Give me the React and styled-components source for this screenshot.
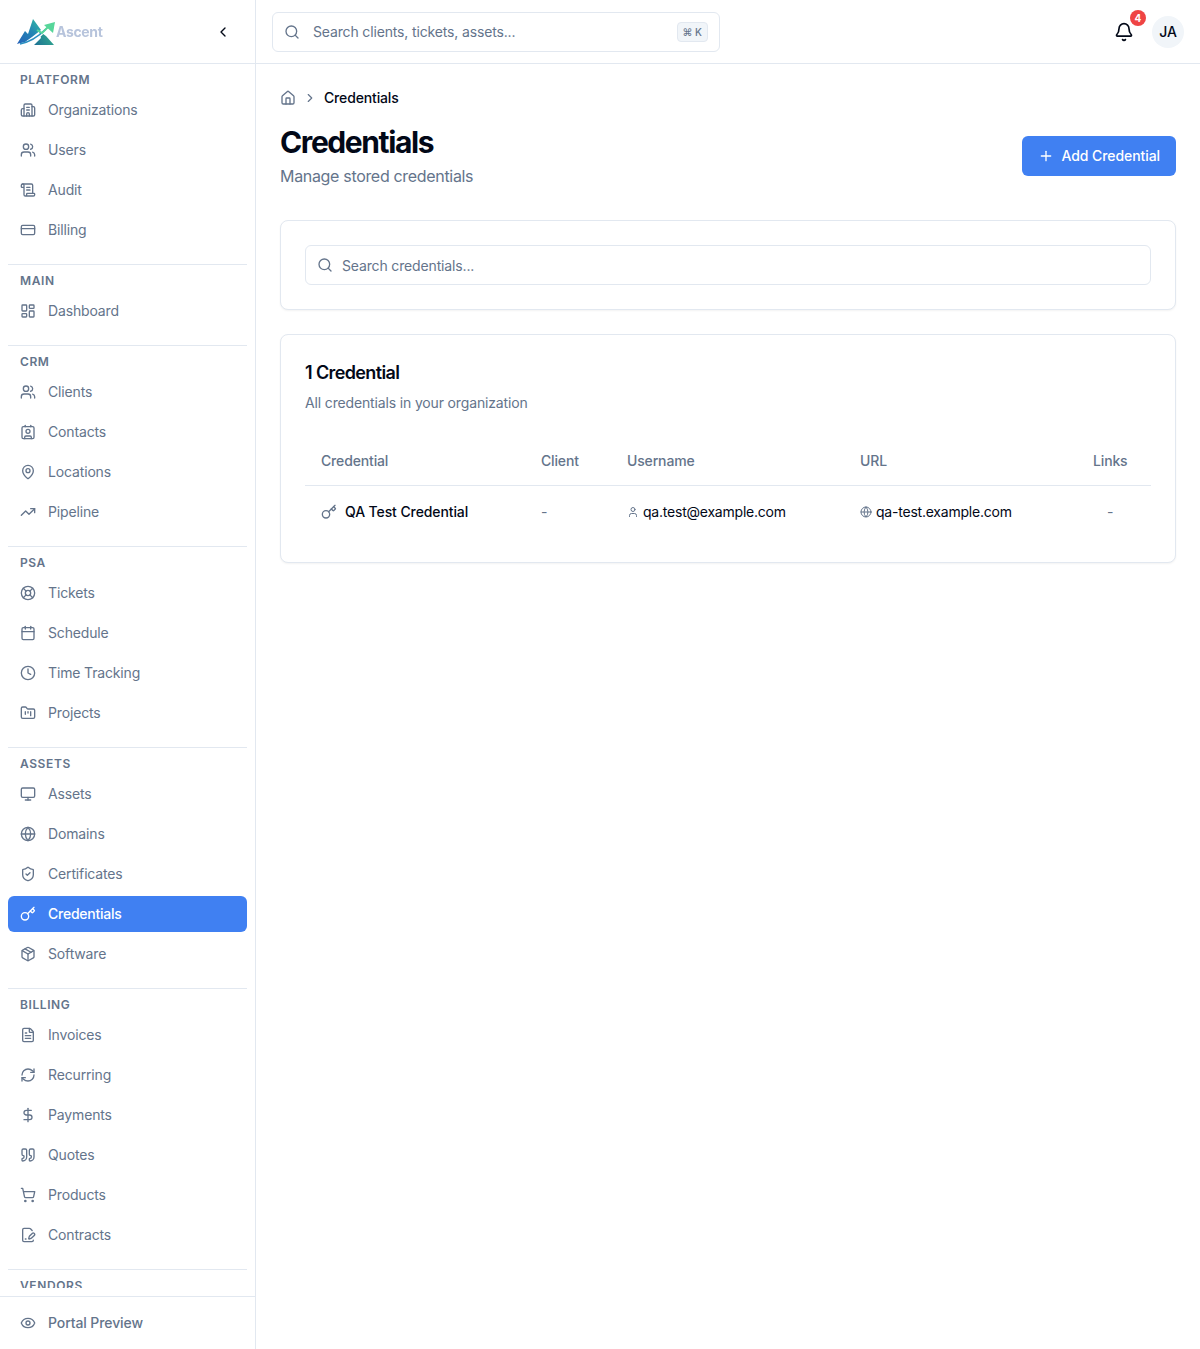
import React from 'react';
import styled, { createGlobalStyle } from 'styled-components';
import {
  Bell, Building2, Calendar, ChevronLeft, ChevronRight, Clock, Contact, CreditCard, DollarSign,
  Eye, FilePenLine, FileText, FolderKanban, Globe, House, Key, LayoutDashboard, LifeBuoy, MapPin,
  Monitor, Package, Plus, Quote, RefreshCw, ScrollText, Search, ShieldCheck, ShoppingCart,
  TrendingUp, User, Users,
} from 'lucide-react';

const GlobalStyle = createGlobalStyle`
  * { box-sizing: border-box; }
  body {
    margin: 0;
    background: #fff;
    color: #020817;
    font-family: Inter, "Liberation Sans", sans-serif;
    font-size: 14px;
    line-height: 20px;
    letter-spacing: -0.15px;
  }
`;

const Shell = styled.div`
  display: flex;
  height: 100vh;
  overflow: hidden;
`;

const Sidebar = styled.aside`
  width: 256px;
  flex-shrink: 0;
  display: flex;
  flex-direction: column;
  border-right: 1px solid #e2e8f0;
`;

const Brand = styled.div`
  height: 64px;
  flex-shrink: 0;
  display: flex;
  align-items: center;
  justify-content: space-between;
  padding: 0 24px 0 16px;
  border-bottom: 1px solid #e2e8f0;
`;

const Logo = styled.div`
  display: flex;
  align-items: center;
`;

const LogoText = styled.span`
  font-size: 14px;
  font-weight: 700;
  letter-spacing: -0.35px;
  color: #b7c4dc;
  filter: blur(0.3px);
`;

const Collapse = styled.button`
  display: flex;
  padding: 0;
  border: 0;
  background: none;
  color: #020817;
`;

const Nav = styled.nav`
  flex: 1;
  min-height: 0;
  overflow: hidden;
  padding: 8px 8px 0;
  margin-bottom: 8px;
`;

const Section = styled.section`
  & + & {
    margin-top: 16px;
    padding-top: 8px;
    border-top: 1px solid #e2e8f0;
  }
`;

const SectionLabel = styled.div`
  height: 16px;
  margin-bottom: 4px;
  padding: 0 12px;
  font-size: 12px;
  line-height: 16px;
  font-weight: 600;
  letter-spacing: 0.6px;
  color: #64748b;
`;

const NavList = styled.div`
  display: flex;
  flex-direction: column;
  gap: 4px;
`;

const NavItem = styled.a`
  height: 36px;
  display: flex;
  align-items: center;
  gap: 12px;
  padding: 0 12px;
  border-radius: 6px;
  font-weight: ${(props) => (props.$active ? 500 : 400)};
  letter-spacing: ${(props) => (props.$active ? '-0.25px' : '-0.15px')};
  color: ${(props) => (props.$active ? '#fff' : '#64748b')};
  background: ${(props) => (props.$active ? '#4080f2' : 'transparent')};
`;

const SidebarFooter = styled.div`
  flex-shrink: 0;
  padding: 8px;
  border-top: 1px solid #e2e8f0;
`;

const FooterItem = styled(NavItem)`
  font-weight: 500;
  letter-spacing: -0.1px;
`;

const Content = styled.div`
  flex: 1;
  min-width: 0;
  display: flex;
  flex-direction: column;
`;

const TopBar = styled.header`
  height: 64px;
  flex-shrink: 0;
  display: flex;
  align-items: center;
  justify-content: space-between;
  padding: 0 16px;
  border-bottom: 1px solid #e2e8f0;
`;

const SearchBox = styled.div`
  height: 40px;
  display: flex;
  align-items: center;
  gap: ${(props) => (props.$wide ? '9px' : '13px')};
  width: ${(props) => (props.$wide ? '100%' : '448px')};
  padding: 0 11px;
  border: 1px solid #e2e8f0;
  border-radius: 6px;
  color: #64748b;
  background: #fff;
`;

const SearchText = styled.span`
  flex: 1;
  padding-top: ${(props) => (props.$wide ? '2px' : '0')};
`;

const Kbd = styled.kbd`
  height: 20px;
  display: flex;
  align-items: center;
  padding: 0 5px;
  border: 1px solid #e2e8f0;
  border-radius: 4px;
  background: #f1f5f9;
  font-family: Inter, sans-serif;
  font-size: 10px;
  font-weight: 500;
  letter-spacing: 0;
  color: #64748b;
`;

const TopActions = styled.div`
  display: flex;
  align-items: center;
  gap: 8px;
`;

const BellButton = styled.button`
  position: relative;
  width: 40px;
  height: 40px;
  display: flex;
  align-items: center;
  justify-content: center;
  padding: 0;
  border: 0;
  background: none;
  color: #020817;
`;

const Badge = styled.span`
  position: absolute;
  top: -2px;
  right: -2px;
  width: 16px;
  height: 16px;
  display: flex;
  align-items: center;
  justify-content: center;
  border-radius: 50%;
  background: #ef4444;
  color: #fff;
  font-family: Inter, sans-serif;
  font-size: 10px;
  font-weight: 700;
`;

const Avatar = styled.div`
  width: 32px;
  height: 32px;
  display: flex;
  align-items: center;
  justify-content: center;
  border-radius: 50%;
  background: #f1f5f9;
  font-weight: 500;
  letter-spacing: 0;
`;

const Main = styled.main`
  padding: 24px;
`;

const Breadcrumb = styled.div`
  height: 20px;
  display: flex;
  align-items: center;
  gap: 7px;
  margin-bottom: 16px;
  font-weight: 500;
  color: #64748b;
`;

const CrumbCurrent = styled.span`
  color: #020817;
`;

const PageHead = styled.div`
  display: flex;
  align-items: center;
  justify-content: space-between;
  margin-bottom: 32px;
`;

const PageTitle = styled.h1`
  margin: 0 0 4px;
  font-size: 30px;
  line-height: 36px;
  font-weight: 700;
  letter-spacing: -1.4px;
`;

const PageSub = styled.p`
  margin: 0;
  font-size: 16px;
  line-height: 24px;
  letter-spacing: -0.32px;
  color: #64748b;
`;

const PrimaryButton = styled.button`
  height: 40px;
  display: flex;
  align-items: center;
  gap: 8px;
  padding: 0 16px;
  border: 0;
  border-radius: 6px;
  background: #4080f2;
  color: #fff;
  font-family: inherit;
  font-size: 14px;
  line-height: 20px;
  letter-spacing: -0.08px;
  font-weight: 500;
`;

const Card = styled.div`
  margin-bottom: 24px;
  border: 1px solid #e2e8f0;
  border-radius: 8px;
  background: #fff;
  box-shadow: 0 1px 2px rgba(0, 0, 0, 0.05);
`;

const FilterBody = styled.div`
  padding: 24px;
`;

const CardHeader = styled.div`
  display: flex;
  flex-direction: column;
  gap: 6px;
  padding: 24px;
`;

const CardTitle = styled.h3`
  margin: 0;
  font-size: 18px;
  line-height: 28px;
  font-weight: 600;
  letter-spacing: -0.62px;
`;

const CardDesc = styled.p`
  margin: 0;
  color: #64748b;
`;

const CardBody = styled.div`
  padding: 0 24px 25px;
`;

const Table = styled.table`
  width: 846px;
  table-layout: fixed;
  border-collapse: collapse;
`;

const Th = styled.th`
  height: 48px;
  padding: 0 16px;
  border-bottom: 1px solid #e2e8f0;
  text-align: left;
  font-weight: 500;
  color: #64748b;
`;

const Td = styled.td`
  height: 52px;
  padding: 2px 16px 0;
  letter-spacing: -0.22px;
  color: ${(props) => (props.$muted ? '#64748b' : '#020817')};
  text-align: ${(props) => (props.$center ? 'center' : 'left')};
`;

const LinksCell = styled(Td)`
  padding: 2px 24px 0 16px;
`;

const CellRow = styled.div`
  display: flex;
  align-items: center;
  gap: ${(props) => props.$gap}px;
`;

const NameRow = styled(CellRow)`
  font-weight: 500;
  letter-spacing: -0.1px;
`;

const Muted = styled.span`
  display: flex;
  color: #64748b;
`;

const sections = [
  { label: 'PLATFORM', items: [['Organizations', Building2], ['Users', Users], ['Audit', ScrollText], ['Billing', CreditCard]] },
  { label: 'MAIN', items: [['Dashboard', LayoutDashboard]] },
  { label: 'CRM', items: [['Clients', Users], ['Contacts', Contact], ['Locations', MapPin], ['Pipeline', TrendingUp]] },
  { label: 'PSA', items: [['Tickets', LifeBuoy], ['Schedule', Calendar], ['Time Tracking', Clock], ['Projects', FolderKanban]] },
  { label: 'ASSETS', items: [['Assets', Monitor], ['Domains', Globe], ['Certificates', ShieldCheck], ['Credentials', Key], ['Software', Package]] },
  { label: 'BILLING', items: [['Invoices', FileText], ['Recurring', RefreshCw], ['Payments', DollarSign], ['Quotes', Quote], ['Products', ShoppingCart], ['Contracts', FilePenLine]] },
  { label: 'VENDORS', items: [] },
];

const AscentMark = () => (
  <svg width="40" height="30" viewBox="0 0 40 30" fill="none">
    <defs>
      <linearGradient id="peak" x1="2" y1="28" x2="22" y2="4" gradientUnits="userSpaceOnUse">
        <stop offset="0" stopColor="#2560b8" />
        <stop offset="0.6" stopColor="#2386b4" />
        <stop offset="1" stopColor="#2fb3a6" />
      </linearGradient>
      <linearGradient id="ridge" x1="18" y1="28" x2="38" y2="16" gradientUnits="userSpaceOnUse">
        <stop offset="0" stopColor="#1c6f94" />
        <stop offset="1" stopColor="#35b08e" />
      </linearGradient>
    </defs>
    <path d="M1 27 L9 14 L12 17 L17 2 L25 13 L16 20 L9 25 Z" fill="url(#peak)" />
    <path d="M23 14 L30 19 L38 28 H18 L25 21 Z" fill="url(#ridge)" />
    <path d="M2 28 C13 27 23 21 32 11" stroke="#fff" strokeWidth="2" />
    <path d="M4 27 C14 25 22 20 30 12" stroke="#2a8fc0" strokeWidth="1.6" />
    <path d="M21 13 L26 16 L33 9" stroke="#57d69a" strokeWidth="2" />
    <path d="M28 8 L39 5 L37 16 Z" fill="#57d69a" />
  </svg>
);

const App = () => (
  <>
    <GlobalStyle />
    <Shell>
      <Sidebar>
        <Brand>
          <Logo>
            <AscentMark />
            <LogoText>Ascent</LogoText>
          </Logo>
          <Collapse>
            <ChevronLeft size={16} />
          </Collapse>
        </Brand>
        <Nav>
          {sections.map((section) => (
            <Section key={section.label}>
              <SectionLabel>{section.label}</SectionLabel>
              <NavList>
                {section.items.map(([name, Icon]) => (
                  <NavItem key={name} $active={name === 'Credentials'}>
                    <Icon size={16} />
                    {name}
                  </NavItem>
                ))}
              </NavList>
            </Section>
          ))}
        </Nav>
        <SidebarFooter>
          <FooterItem>
            <Eye size={16} />
            Portal Preview
          </FooterItem>
        </SidebarFooter>
      </Sidebar>
      <Content>
        <TopBar>
          <SearchBox>
            <Search size={16} />
            <SearchText>Search clients, tickets, assets...</SearchText>
            <Kbd>⌘ K</Kbd>
          </SearchBox>
          <TopActions>
            <BellButton>
              <Bell size={20} />
              <Badge>4</Badge>
            </BellButton>
            <Avatar>JA</Avatar>
          </TopActions>
        </TopBar>
        <Main>
          <Breadcrumb>
            <House size={16} />
            <ChevronRight size={14} />
            <CrumbCurrent>Credentials</CrumbCurrent>
          </Breadcrumb>
          <PageHead>
            <div>
              <PageTitle>Credentials</PageTitle>
              <PageSub>Manage stored credentials</PageSub>
            </div>
            <PrimaryButton>
              <Plus size={16} />
              Add Credential
            </PrimaryButton>
          </PageHead>
          <Card>
            <FilterBody>
              <SearchBox $wide>
                <Search size={16} />
                <SearchText $wide>Search credentials...</SearchText>
              </SearchBox>
            </FilterBody>
          </Card>
          <Card>
            <CardHeader>
              <CardTitle>1 Credential</CardTitle>
              <CardDesc>All credentials in your organization</CardDesc>
            </CardHeader>
            <CardBody>
              <Table>
                <colgroup>
                  <col width="220" />
                  <col width="86" />
                  <col width="233" />
                  <col width="233" />
                  <col width="74" />
                </colgroup>
                <thead>
                  <tr>
                    <Th>Credential</Th>
                    <Th>Client</Th>
                    <Th>Username</Th>
                    <Th>URL</Th>
                    <Th>Links</Th>
                  </tr>
                </thead>
                <tbody>
                  <tr>
                    <Td>
                      <NameRow $gap={8}>
                        <Muted><Key size={16} /></Muted>
                        QA Test Credential
                      </NameRow>
                    </Td>
                    <Td $muted>-</Td>
                    <Td>
                      <CellRow $gap={4}>
                        <Muted><User size={12} /></Muted>
                        qa.test@example.com
                      </CellRow>
                    </Td>
                    <Td>
                      <CellRow $gap={4}>
                        <Muted><Globe size={12} /></Muted>
                        qa-test.example.com
                      </CellRow>
                    </Td>
                    <LinksCell $muted $center>-</LinksCell>
                  </tr>
                </tbody>
              </Table>
            </CardBody>
          </Card>
        </Main>
      </Content>
    </Shell>
  </>
);

export default App;
